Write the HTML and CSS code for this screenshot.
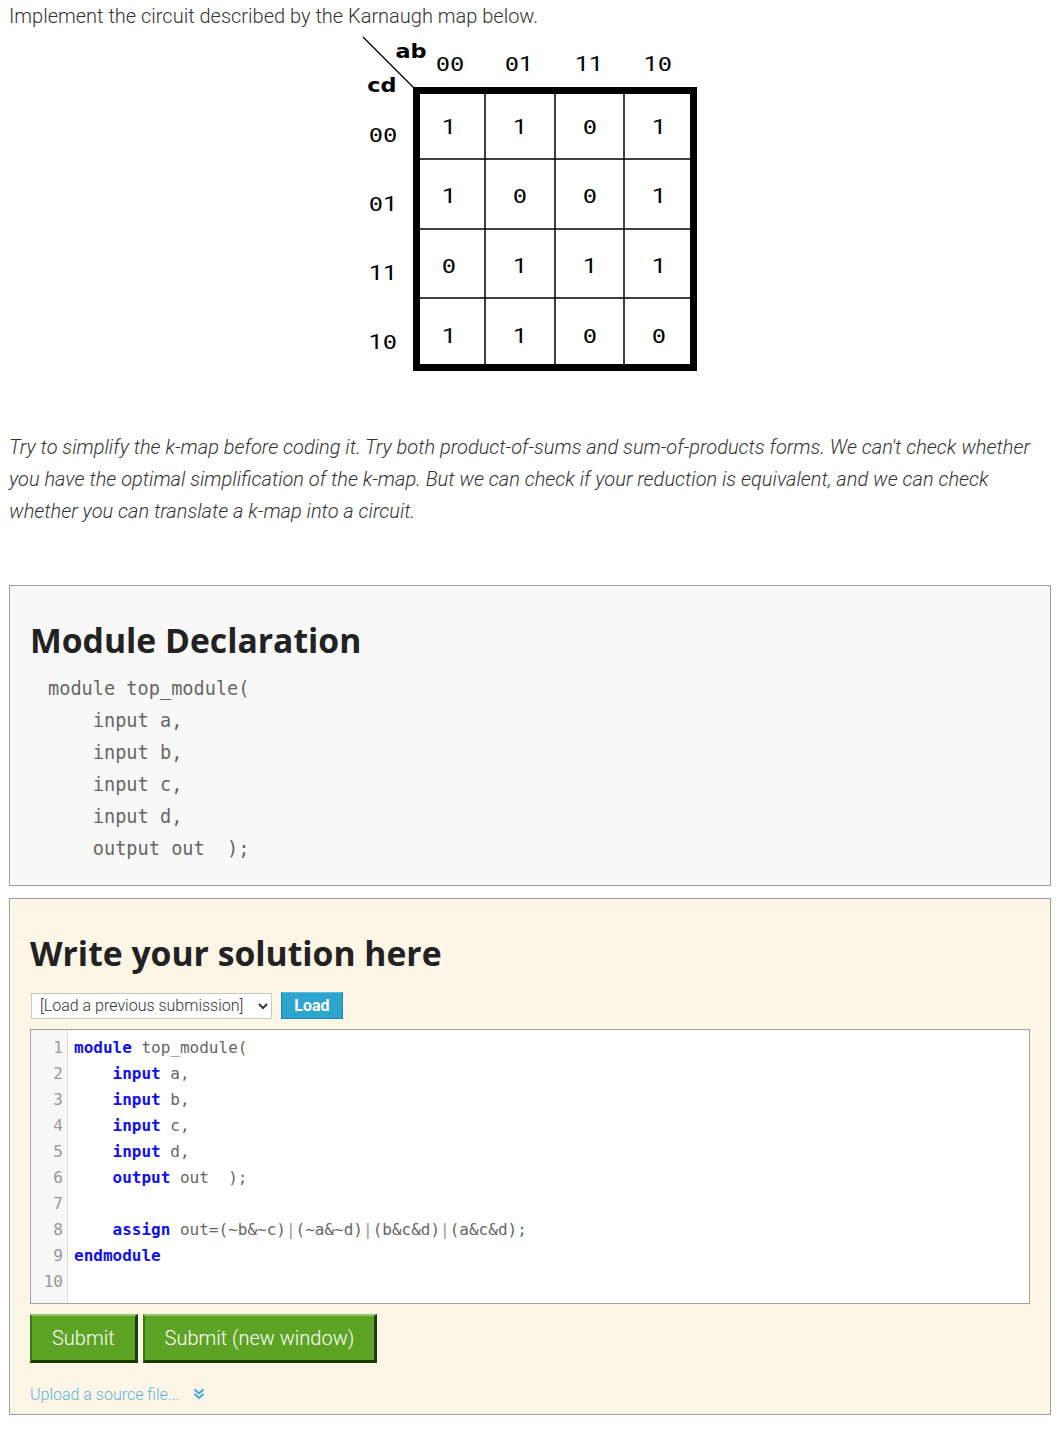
FILE: index.html
```html
<!DOCTYPE html>
<html lang="en">
<head>
<meta charset="utf-8">
<title>Karnaugh map circuit</title>
<link rel="stylesheet" href="styles.css">
</head>
<body>
<div class="page">
  <p class="intro">Implement the circuit described by the Karnaugh map below.</p>

  <svg class="kmap" width="340" height="340" viewBox="0 0 340 340" xmlns="http://www.w3.org/2000/svg">
    <line x1="2" y1="2" x2="53" y2="53" class="kline-thin"/>
    <text x="50" y="23" class="kt klabel">ab</text>
    <text x="21" y="57" class="kt klabel">cd</text>

    <text x="89" y="36" class="kt kdig"><tspan class="z">0</tspan><tspan class="z">0</tspan></text>
    <text x="158" y="36" class="kt kdig"><tspan class="z">0</tspan><tspan class="o">1</tspan></text>
    <text x="228" y="36" class="kt kdig"><tspan class="o">1</tspan><tspan class="o">1</tspan></text>
    <text x="297" y="36" class="kt kdig"><tspan class="o">1</tspan><tspan class="z">0</tspan></text>

    <text x="22" y="107" class="kt kdig"><tspan class="z">0</tspan><tspan class="z">0</tspan></text>
    <text x="22" y="176" class="kt kdig"><tspan class="z">0</tspan><tspan class="o">1</tspan></text>
    <text x="22" y="245" class="kt kdig"><tspan class="o">1</tspan><tspan class="o">1</tspan></text>
    <text x="22" y="314" class="kt kdig"><tspan class="o">1</tspan><tspan class="z">0</tspan></text>

    <rect x="55.5" y="55.5" width="277" height="277" class="kbox"/>
    <line x1="124" y1="55" x2="124" y2="333" class="kline"/>
    <line x1="194" y1="55" x2="194" y2="333" class="kline"/>
    <line x1="263" y1="55" x2="263" y2="333" class="kline"/>
    <line x1="55" y1="124" x2="333" y2="124" class="kline"/>
    <line x1="55" y1="194" x2="333" y2="194" class="kline"/>
    <line x1="55" y1="263" x2="333" y2="263" class="kline"/>

    <text x="88" y="99" class="kt kdig o">1</text>
    <text x="159" y="99" class="kt kdig o">1</text>
    <text x="229" y="99" class="kt kdig z">0</text>
    <text x="298" y="99" class="kt kdig o">1</text>

    <text x="88" y="168" class="kt kdig o">1</text>
    <text x="159" y="168" class="kt kdig z">0</text>
    <text x="229" y="168" class="kt kdig z">0</text>
    <text x="298" y="168" class="kt kdig o">1</text>

    <text x="88" y="238" class="kt kdig z">0</text>
    <text x="159" y="238" class="kt kdig o">1</text>
    <text x="229" y="238" class="kt kdig o">1</text>
    <text x="298" y="238" class="kt kdig o">1</text>

    <text x="88" y="308" class="kt kdig o">1</text>
    <text x="159" y="308" class="kt kdig o">1</text>
    <text x="229" y="308" class="kt kdig z">0</text>
    <text x="298" y="308" class="kt kdig z">0</text>
  </svg>

  <p class="note">Try to simplify the k-map before coding it. Try both product-of-sums and sum-of-products forms. We can't check whether you have the optimal simplification of the k-map. But we can check if your reduction is equivalent, and we can check whether you can translate a k-map into a circuit.</p>

  <section class="box decl">
    <h2 class="box-title">Module Declaration</h2>
    <div class="decl-code">
      <div class="ln">module top_module(</div>
      <div class="ln">    input a,</div>
      <div class="ln">    input b,</div>
      <div class="ln">    input c,</div>
      <div class="ln">    input d,</div>
      <div class="ln">    output out  );</div>
    </div>
  </section>

  <section class="box solution">
    <h2 class="box-title">Write your solution here</h2>
    <div class="load-row">
      <select class="prev-select">
        <option>[Load a previous submission]</option>
      </select>
      <button class="load-btn" type="button">Load</button>
    </div>
    <div class="editor">
      <div class="gutter"><span>1</span><span>2</span><span>3</span><span>4</span><span>5</span><span>6</span><span>7</span><span>8</span><span>9</span><span>10</span></div>
      <div class="code">
        <div class="ln"><span class="kw">module</span><span> top_module(</span></div>
        <div class="ln"><span>    </span><span class="kw">input</span><span> a,</span></div>
        <div class="ln"><span>    </span><span class="kw">input</span><span> b,</span></div>
        <div class="ln"><span>    </span><span class="kw">input</span><span> c,</span></div>
        <div class="ln"><span>    </span><span class="kw">input</span><span> d,</span></div>
        <div class="ln"><span>    </span><span class="kw">output</span><span> out  );</span></div>
        <div class="ln"></div>
        <div class="ln"><span>    </span><span class="kw">assign</span><span> out=(~b&amp;~c)</span><span class="op">|</span><span>(~a&amp;~d)</span><span class="op">|</span><span>(b&amp;c&amp;d)</span><span class="op">|</span><span>(a&amp;c&amp;d);</span></div>
        <div class="ln"><span class="kw">endmodule</span></div>
        <div class="ln"></div>
      </div>
    </div>
    <div class="actions">
      <button class="submit-btn" type="button">Submit</button>
      <button class="submit-btn" type="button">Submit (new window)</button>
    </div>
    <div class="upload">
      <a class="upload-link" href="#">Upload a source file...</a>
      <svg class="upload-icon" width="12" height="12" viewBox="0 0 12 12" xmlns="http://www.w3.org/2000/svg">
        <polyline points="1.5,1.5 6,5.5 10.5,1.5" />
        <polyline points="1.5,6 6,10 10.5,6" />
      </svg>
    </div>
  </section>
</div>
</body>
</html>
```

FILE: styles.css
```css
html, body {
  margin: 0;
  padding: 0;
  background: #ffffff;
}

body {
  font-family: Roboto, "Liberation Sans", sans-serif;
  font-weight: 300;
  font-size: 20px;
  color: #333333;
}

.page {
  width: 1042px;
  margin-left: 9px;
  padding-bottom: 16px;
}

.intro {
  margin: 0;
  line-height: 32px;
}

.kmap {
  display: block;
  margin: 3px auto 0;
  position: relative;
  left: 1px;
}

.kt {
  transform-box: fill-box;
  transform-origin: center;
  transform: scaleX(1.25);
  text-anchor: middle;
  fill: #000;
}

.kdig {
  font-family: "DejaVu Sans Mono", monospace;
  font-size: 19px;
}

.kdig .o,
.kdig.o {
  font-family: Roboto, sans-serif;
  font-weight: 400;
  font-size: 20px;
}

.kdig .z,
.kdig.z {
  font-family: "DejaVu Sans Mono", monospace;
  font-size: 19px;
}

.klabel {
  font-family: "DejaVu Sans", sans-serif;
  font-weight: 700;
  font-size: 20px;
  transform: scaleX(1.12);
}

.kbox {
  fill: none;
  stroke: #000;
  stroke-width: 7;
}

.kline {
  stroke: #000;
  stroke-width: 1.5;
}

.kline-thin {
  stroke: #000;
  stroke-width: 1.3;
}

.note {
  margin: 56px 0 0;
  font-style: italic;
  line-height: 32px;
}

.box {
  border: 1px solid #9e9e9e;
  padding: 0 20px;
}

.decl {
  margin-top: 58px;
  background: #f8f8f8;
  padding-bottom: 20px;
}

.solution {
  margin-top: 12px;
  background: #fdf5e6;
  padding-bottom: 10px;
}

.box-title {
  margin: 34px 0 0;
  font-family: "Open Sans", sans-serif;
  font-weight: 700;
  font-size: 33.7px;
  line-height: 41px;
  color: #222222;
}

.ln {
  white-space: pre;
}

.decl-code {
  margin: 12px 0 0;
  padding-left: 18px;
  font-family: "DejaVu Sans Mono", monospace;
  font-size: 18.6px;
  line-height: 32px;
  color: #666666;
}

.load-row {
  display: flex;
  align-items: center;
  gap: 9px;
  margin-top: 18px;
  height: 27px;
}

.prev-select {
  width: 241px;
  height: 26px;
  border: 1px solid #c8c8c8;
  border-radius: 0;
  background: #ffffff;
  font-family: Roboto, sans-serif;
  font-weight: 300;
  font-size: 16px;
  color: #333;
  padding: 0 4px;
  margin: 0 0 0 1px;
}

.load-btn {
  height: 27px;
  width: 62px;
  padding: 0;
  background: #2ea5ce;
  border: 1px solid #2486ab;
  border-top-color: #5dbde0;
  color: #ffffff;
  font-family: Roboto, sans-serif;
  font-weight: 700;
  font-size: 16px;
}

.editor {
  margin-top: 10px;
  display: flex;
  border: 1px solid #a0a0a0;
  background: #ffffff;
  padding: 5px 0 8px;
  font-family: "DejaVu Sans Mono", monospace;
  font-size: 16px;
  line-height: 26px;
}

.gutter {
  display: flex;
  flex-direction: column;
  align-items: flex-end;
  width: 32px;
  padding-right: 4px;
  background: #f7f7f7;
  border-right: 1px solid #dddddd;
  color: #999999;
  margin: -5px 0 -8px;
  padding-top: 5px;
  padding-bottom: 8px;
}

.code {
  padding-left: 6px;
  color: #666666;
}

.code .ln {
  height: 26px;
}

.kw {
  color: #1010ee;
  font-weight: 700;
}

.op {
  color: #999999;
}

.actions {
  display: flex;
  gap: 5px;
  margin-top: 10px;
}

.submit-btn {
  height: 49px;
  padding: 0 20px;
  background: #5ea424;
  color: #ffffff;
  font-family: Roboto, sans-serif;
  font-weight: 300;
  font-size: 20px;
  border-style: solid;
  border-width: 2px 3px 3px 2px;
  border-color: #92c767 #1b3a08 #1b3a08 #3d7a16;
  border-radius: 0;
}

.upload {
  display: flex;
  align-items: center;
  gap: 14px;
  margin-top: 21px;
  height: 20px;
}

.upload-link {
  font-size: 16px;
  color: #5bb5e0;
  text-decoration: none;
}

.upload-icon polyline {
  fill: none;
  stroke: #3fa7dc;
  stroke-width: 2;
}
```
